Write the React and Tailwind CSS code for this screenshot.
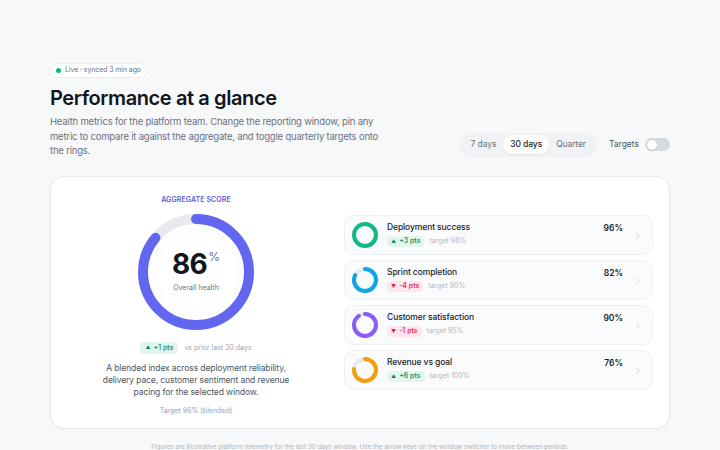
import React from "react";

const metrics = [
  { name: "Deployment success", value: 96, delta: "+3 pts", up: true, target: "target 98%", color: "#10b981" },
  { name: "Sprint completion", value: 82, delta: "-4 pts", up: false, target: "target 90%", color: "#0ea5e9" },
  { name: "Customer satisfaction", value: 90, delta: "-1 pts", up: false, target: "target 95%", color: "#8b5cf6" },
  { name: "Revenue vs goal", value: 76, delta: "+6 pts", up: true, target: "target 100%", color: "#f59e0b" },
];

function Ring({ size, stroke, value, color, track = "#e8eaee" }) {
  const r = (size - stroke) / 2;
  const c = 2 * Math.PI * r;
  return (
    <svg width={size} height={size} viewBox={`0 0 ${size} ${size}`} className="shrink-0 -rotate-90">
      <circle cx={size / 2} cy={size / 2} r={r} fill="none" stroke={track} strokeWidth={stroke} />
      <circle
        cx={size / 2}
        cy={size / 2}
        r={r}
        fill="none"
        stroke={color}
        strokeWidth={stroke}
        strokeLinecap="round"
        strokeDasharray={`${(c * value) / 100} ${c}`}
      />
    </svg>
  );
}

function Delta({ up, children }) {
  return (
    <span
      className={`inline-flex h-[11px] items-center gap-[3px] rounded-[4px] px-[4px] text-[7px] font-medium ${
        up ? "bg-[#e3f6ee] text-[#0f8a5f]" : "bg-[#fde6ec] text-[#e11d48]"
      }`}
    >
      <span className="text-[5px]">{up ? "▲" : "▼"}</span>
      {children}
    </span>
  );
}

function MetricRow({ m }) {
  return (
    <div className="flex h-[40px] items-center rounded-[10px] border border-[#eef0f3] bg-[#fafbfc] pl-[7px] pr-[10px]">
      <Ring size={26} stroke={4} value={m.value} color={m.color} />
      <div className="ml-[9px] flex flex-1 flex-col gap-[3px]">
        <div className="text-[8.5px] font-medium leading-[11px] tracking-[-0.1px] text-[#1b1f2a]">{m.name}</div>
        <div className="flex items-center gap-[5px]">
          <Delta up={m.up}>{m.delta}</Delta>
          <span className="text-[7px] text-[#b5b9c2]">{m.target}</span>
        </div>
      </div>
      <div className="mb-[12px] text-[8.5px] font-semibold text-[#1b1f2a]">{m.value}%</div>
      <svg width="8" height="8" viewBox="0 0 8 8" className="ml-[11px] mt-[2px]">
        <path d="M2.8 1.5 L5.3 4 L2.8 6.5" fill="none" stroke="#cfd3da" strokeWidth="1" strokeLinecap="round" strokeLinejoin="round" />
      </svg>
    </div>
  );
}

export default function App() {
  return (
    <div
      className="min-h-screen bg-[#f7f8fa] px-[50px] pt-[63px] text-[#1b1f2a]"
      style={{ fontFamily: "Inter, 'Noto Sans', sans-serif" }}
    >
      <div className="flex h-[15px] w-fit items-center gap-[4px] rounded-full border border-[#eceef2] bg-white px-[5px] text-[7px] tracking-[-0.1px] text-[#6b7280]">
        <span className="h-[5px] w-[5px] rounded-full bg-[#10b981]" />
        Live · synced 3 min ago
      </div>

      <h1 className="mt-[8px] text-[20px] font-semibold leading-[24px] tracking-[-0.4px] text-[#111520]">
        Performance at a glance
      </h1>

      <div className="mt-[5px] flex items-end justify-between">
        <p className="w-[334px] text-[9.5px] leading-[14.5px] tracking-[-0.2px] text-[#6b7280]">
          Health metrics for the platform team. Change the reporting window, pin any metric to compare it against the aggregate, and toggle quarterly targets onto the rings.
        </p>
        <div className="mb-[2px] flex items-center">
          <div className="flex h-[24px] items-center rounded-full border border-[#eef0f3] bg-[#f0f2f5] px-[3px] text-[8.5px] tracking-[-0.1px] text-[#6b7280]">
            <span className="px-[7px]">7 days</span>
            <span className="rounded-full bg-white px-[7px] py-[3px] font-medium text-[#1b1f2a] shadow-[0_1px_2px_rgba(0,0,0,0.06)]">30 days</span>
            <span className="px-[7px]">Quarter</span>
          </div>
          <span className="ml-[12px] text-[8.5px] text-[#4b5563]">Targets</span>
          <div className="ml-[6px] flex h-[13px] w-[25px] items-center rounded-full bg-[#d5d9e0] px-[1.5px]">
            <span className="h-[10px] w-[10px] rounded-full bg-white shadow-[0_1px_1px_rgba(0,0,0,0.15)]" />
          </div>
        </div>
      </div>

      <div className="mt-[17px] flex h-[253px] items-center rounded-[14px] border border-[#e8ebef] bg-white shadow-[0_1px_3px_rgba(16,24,40,0.04)]">
        <div className="flex w-[290px] flex-col items-center self-stretch pt-[18px]">
          <div className="text-[7px] font-semibold uppercase tracking-[0.1px] text-[#5b5bd6]">Aggregate score</div>
          <div className="relative mt-[9px] h-[116px] w-[116px]">
            <Ring size={116} stroke={10} value={86} color="#6366f1" />
            <div className="absolute inset-[12px] flex flex-col items-center justify-center rounded-full bg-[radial-gradient(circle,#ffffff_55%,#f4f5fa_100%)]">
              <div className="flex items-start leading-none">
                <span className="text-[28px] font-bold tracking-[-0.5px] text-[#111520]">86</span>
                <span className="ml-[1px] mt-[1px] text-[12px] text-[#6b7280]">%</span>
              </div>
              <div className="mt-[5px] text-[7px] text-[#6b7280]">Overall health</div>
            </div>
          </div>
          <div className="mt-[12px] flex items-center gap-[6px]">
            <span className="inline-flex h-[12px] items-center gap-[3px] rounded-[4px] bg-[#e3f6ee] px-[5px] text-[7px] font-medium text-[#0f8a5f]">
              <span className="text-[5px]">▲</span>+1 pts
            </span>
            <span className="text-[7px] text-[#9ca3af]">vs prior last 30 days</span>
          </div>
          <p className="mt-[8px] w-[200px] text-center text-[8.5px] leading-[12px] tracking-[-0.1px] text-[#4b5563]">
            A blended index across deployment reliability, delivery pace, customer sentiment and revenue pacing for the selected window.
          </p>
          <div className="mt-[8px] text-[7px] text-[#9ca3af]">Target 96% (blended)</div>
        </div>
        <div className="ml-[3px] flex w-[309px] flex-col gap-[5px]">
          {metrics.map((m) => (
            <MetricRow key={m.name} m={m} />
          ))}
        </div>
      </div>

      <p className="mt-[14px] text-center text-[6.5px] tracking-[-0.1px] text-[#b0b5be]">
        Figures are illustrative platform telemetry for the last 30 days window. Use the arrow keys on the window switcher to move between periods.
      </p>
    </div>
  );
}
